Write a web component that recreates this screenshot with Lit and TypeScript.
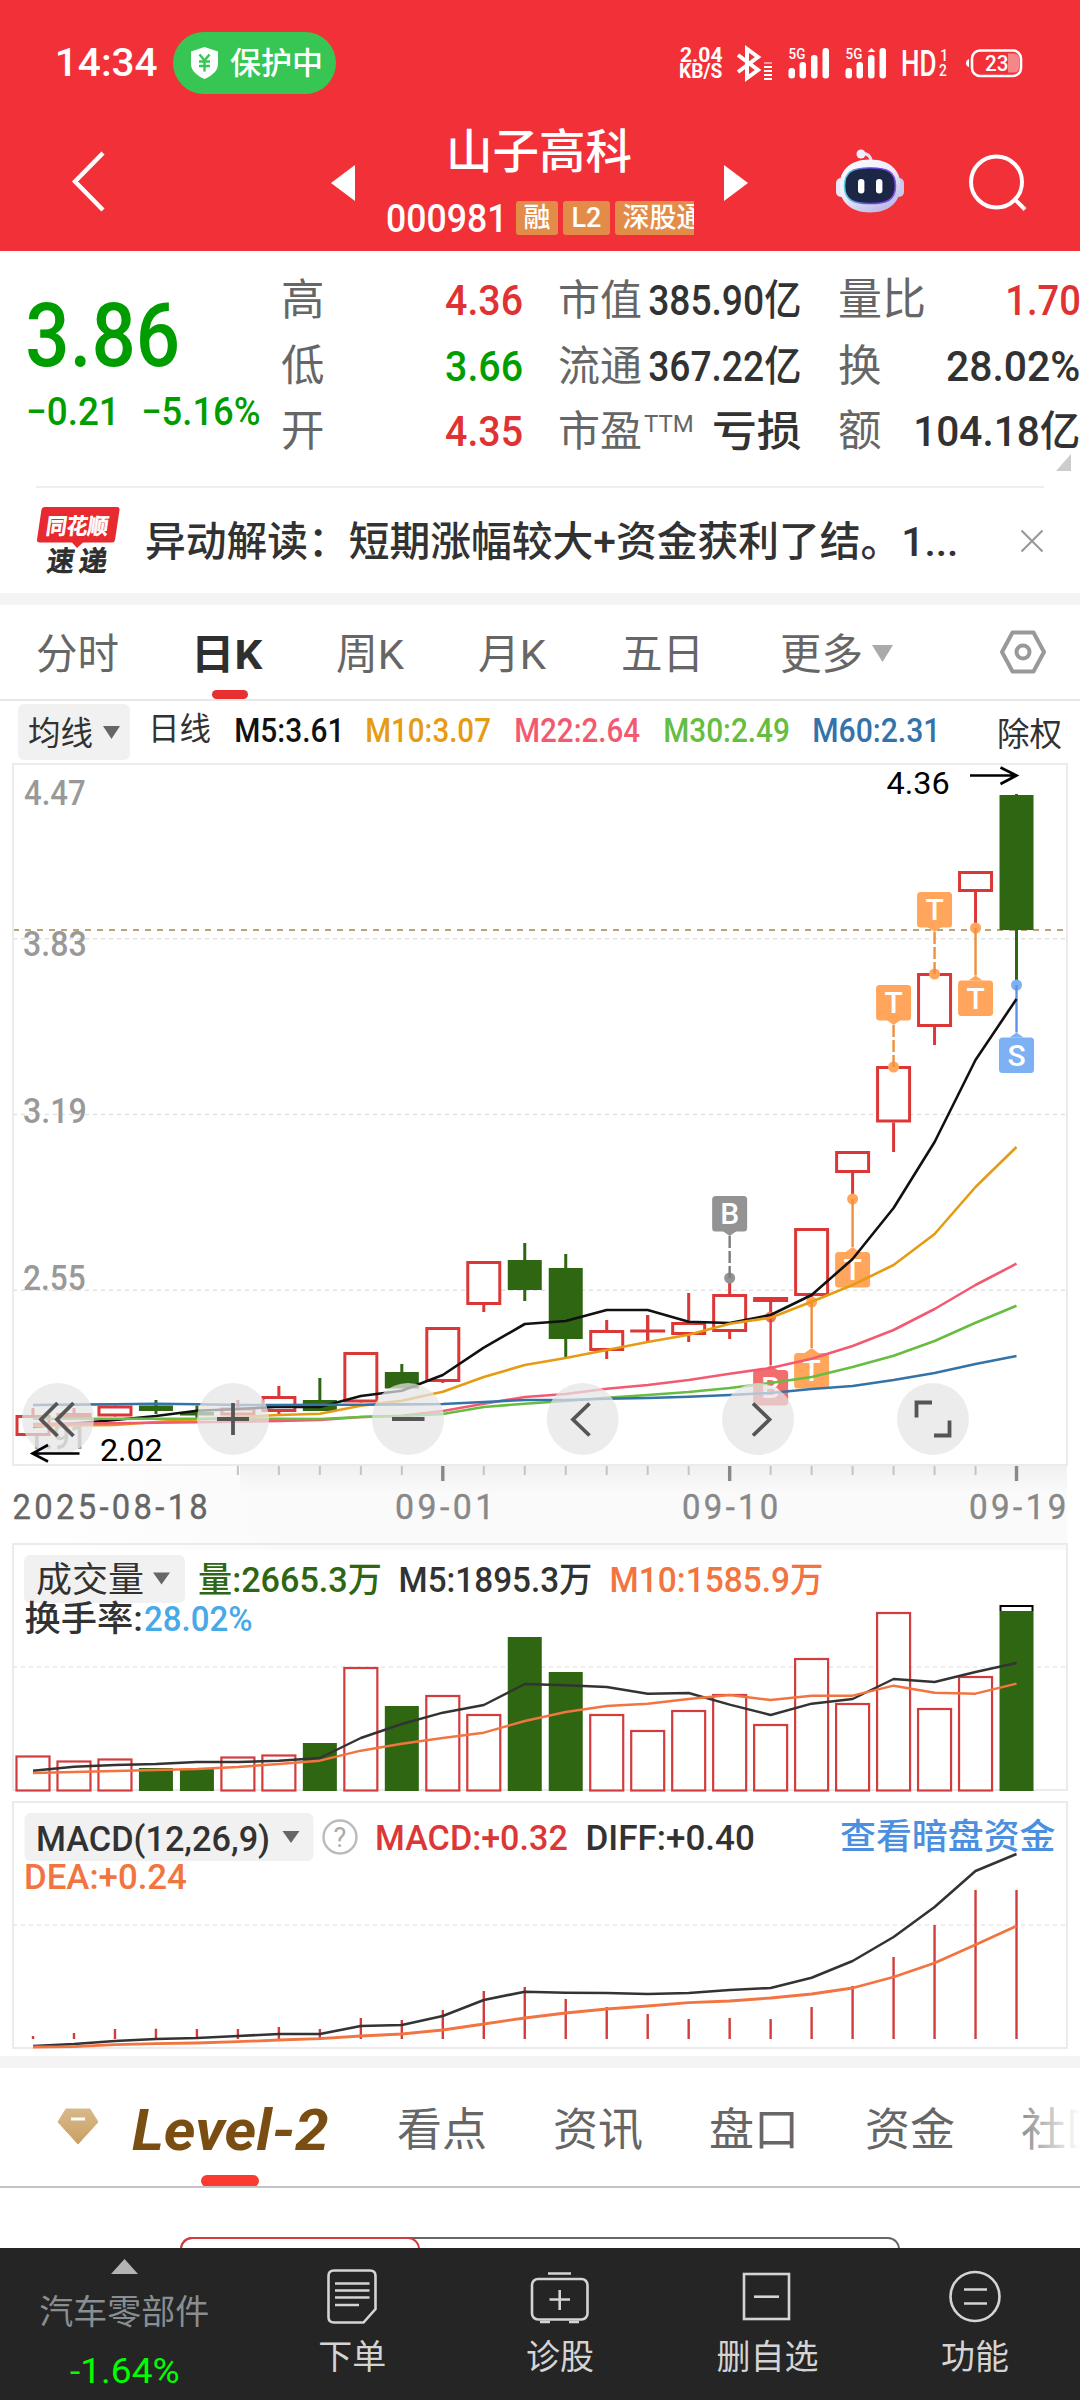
import { LitElement, html, svg, css } from "lit";
import { customElement } from "lit/decorators.js";

const STEP = 40.98;
const X0 = 33;
const cx = (i: number) => X0 + i * STEP;

type Candle = [up: number, top: number, bottom: number, high: number, low: number];
const CANDLES: Candle[] = [
  [1, 1415, 1436, 1408, 1436], [1, 1413, 1418, 1408, 1418], [1, 1405.5, 1416.5, 1403, 1416],
  [0, 1405.5, 1411, 1400, 1414], [0, 1412, 1415.5, 1405.5, 1418], [1, 1407.5, 1415.5, 1400, 1415],
  [1, 1396, 1412, 1386, 1414], [0, 1400, 1411, 1378, 1411], [1, 1352, 1402.5, 1352, 1402],
  [0, 1372, 1388.5, 1364, 1388], [1, 1327, 1382, 1327, 1383], [1, 1261, 1305, 1261, 1312],
  [0, 1260, 1290, 1243, 1301], [0, 1268, 1339, 1254, 1357], [1, 1330, 1351, 1320, 1359],
  [1, 1329.5, 1332.5, 1315, 1341], [1, 1322, 1335, 1293, 1342], [1, 1294, 1332, 1279, 1339],
  [1, 1297, 1302, 1297, 1317], [1, 1228, 1296, 1228, 1300], [1, 1151, 1173, 1151, 1199],
  [1, 1066, 1122.5, 1066, 1152], [1, 973, 1027, 973, 1045], [1, 871, 892, 871, 927],
  [0, 795, 930, 794, 985],
];

const MA_LINES: [string, number[]][] = [
  ["#111", [1427, 1423.5, 1420, 1416, 1410.7, 1409, 1406.7, 1407, 1396, 1390.7, 1375, 1347.7, 1324, 1321, 1310, 1310, 1321.7, 1323, 1315, 1295, 1259, 1208, 1142, 1060, 999]],
  ["#e59c12", [1426, 1425.5, 1425, 1422, 1419.5, 1417, 1415, 1413.7, 1405.7, 1400.7, 1391.7, 1377, 1365, 1358, 1350, 1342, 1334.7, 1323.7, 1317.7, 1301.7, 1285, 1265, 1234, 1187, 1147]],
  ["#f25a72", [1424, 1423.6, 1423.3, 1422.8, 1422.3, 1421.7, 1421, 1420, 1417, 1415.7, 1411, 1403.7, 1397, 1394, 1388.7, 1385, 1380, 1373.7, 1368, 1358.7, 1346, 1330, 1309, 1285, 1263.7]],
  ["#66bd42", [1418.7, 1418.7, 1418.7, 1418.7, 1418.7, 1418.7, 1418.8, 1419, 1417, 1416, 1414, 1407, 1403.7, 1401, 1397.7, 1395, 1392, 1388, 1383, 1377, 1367, 1355.7, 1341, 1322.7, 1305.7]],
  ["#3373a8", [1405, 1404.6, 1404.2, 1403.7, 1404.3, 1405, 1405, 1404.8, 1404.7, 1404.4, 1404, 1402, 1400, 1400, 1398.7, 1398, 1396.7, 1395, 1393, 1389, 1386, 1380, 1373, 1364, 1356]],
];

type Mark = [i: number, letter: string, color: string, line: string, dot: number, box: number];
const MARKS: Mark[] = [
  [17, "B", "#939393", "#7c7c7c", 1278, 1196],
  [18, "B", "#f26d6d", "#e24040", 1317, 1370],
  [19, "T", "#ffa65c", "#ef8f3e", 1302, 1353],
  [20, "T", "#ffa65c", "#ef8f3e", 1199, 1252],
  [21, "T", "#ffa65c", "#ef8f3e", 1067, 985],
  [22, "T", "#ffa65c", "#ef8f3e", 974, 892],
  [23, "T", "#ffa65c", "#ef8f3e", 928, 980.5],
  [24, "S", "#7db1f3", "#5a94e6", 985, 1037.5],
];

const VOL: [number, number][] = [
  [1, 1755.5], [1, 1760.5], [1, 1758.5], [0, 1768], [0, 1769], [1, 1756.5], [1, 1754.5], [0, 1743],
  [1, 1667], [0, 1706], [1, 1695], [1, 1714], [0, 1637], [0, 1672], [1, 1714], [1, 1730], [1, 1710],
  [1, 1694], [1, 1724], [1, 1658], [1, 1703], [1, 1612], [1, 1708], [1, 1676], [0, 1611],
];
const VOL_M5 = [1770.7, 1766.7, 1765, 1764, 1762, 1762, 1760.7, 1758, 1738, 1724, 1712.7, 1705, 1684, 1685.3, 1687, 1693.7, 1693, 1704.7, 1715, 1703.7, 1699, 1679, 1682, 1672, 1663];
const VOL_M10 = [1773, 1772, 1771, 1770, 1769, 1767, 1764, 1760.7, 1750.7, 1743.7, 1738, 1732.7, 1721, 1712, 1706, 1703.7, 1699, 1695, 1700, 1695.7, 1695.7, 1685.7, 1692.7, 1693.7, 1683.7];

const MACD_BAR = [2036, 2033, 2029, 2028.7, 2029, 2029, 2027, 2029, 2018, 2020, 2010, 1991, 1987, 1999, 2007, 2014, 2019, 2018, 2019, 2007, 1986, 1957, 1925, 1890, 1890];
const DIFF = [2046, 2044, 2041, 2039, 2038, 2036, 2034, 2034, 2026, 2025, 2016, 2000, 1991.7, 1992.7, 1993, 1994, 1993, 1990, 1988, 1977.7, 1961, 1937, 1907, 1871, 1854];
const DEA = [2047, 2046.7, 2044.7, 2043.7, 2043, 2041.7, 2040, 2038.7, 2036, 2034, 2030, 2024, 2018, 2013, 2009, 2006, 2002.7, 2001, 1998, 1994, 1988, 1977, 1963, 1944.7, 1926];

const line = (ys: number[], color: string, w = 2.4) =>
  svg`<polyline points=${ys.map((y, i) => `${cx(i).toFixed(1)},${y}`).join(" ")} fill="none" stroke=${color} stroke-width=${w} stroke-linejoin="round"/>`;

/* Chart text whose drawn width is w pixels, starting at x on baseline y. */
const label = (t: string, x: number, y: number, w: number, size: number, color: string) =>
  svg`<text class="num" data-x=${x} data-y=${y} data-w=${w} x=${x} y=${y} font-size=${size} fill=${color}>${t}</text>`;

/* Inline text squeezed to a drawn width of w pixels. */
const fit = (t: string, w: number, cls = "") =>
  html`<span class="fit ${cls}" style="width:${w}px"><span class="fit-in" data-w=${w}>${t}</span></span>`;

@customElement("app-root")
export class AppRoot extends LitElement {
  static styles = css`
    :host { display: block; width: 1080px; height: 2400px; overflow: hidden; background: #fff; color: #323232;
      font-family: Roboto, "Noto Sans CJK SC", sans-serif; }
    * { box-sizing: border-box; }
    svg { display: block; flex: none; overflow: visible; }
    .page { display: flex; flex-direction: column; width: 1080px; height: 2400px; }
    .fit { display: block; flex: none; white-space: nowrap; }
    .fit-in { display: inline-block; transform-origin: 0 50%; }
    .num { font-weight: 500; }
    .thin .num { font-weight: 400; }
    .dates .num { font-weight: 400; letter-spacing: 3.5px; stroke-width: .4px; }

    .head { height: 251px; background: #f23038; color: #fff; flex: none; display: flex; flex-direction: column; }
    .status { height: 126px; padding: 0 56px 0 58px; display: flex; align-items: center; }
    .time { font-size: 38px; font-weight: 500; line-height: 60px; }
    .guard { margin-left: 16px; width: 165px; height: 62px; border-radius: 31px; background: #37c653;
      display: flex; align-items: center; padding-left: 17px; gap: 11px; font-size: 31px; line-height: 62px; font-weight: 500; }
    .guard span { margin-top: 2px; }
    .rate { margin-left: 344px; font-size: 20px; font-weight: 700; line-height: 16px; }
    .sys { margin-left: 14px; }
    .title { flex: 1; display: flex; padding-left: 66px; }
    .back { margin-top: 24px; }
    .prev { margin: 39px 0 0 221px; }
    .names { width: 307px; margin-left: 32px; display: flex; flex-direction: column; }
    .stock { text-align: center; font-size: 46.5px; font-weight: 500; line-height: 50px; margin-left: -3px; padding-top: 1px; }
    .code-row { display: flex; width: 307px; height: 34px; margin-top: 24px; line-height: 36px; }
    .code { font-size: 39px; font-weight: 500; margin-right: 15px; }
    .tags { width: 178px; height: 34px; display: flex; overflow: hidden; }
    .tag { flex: none; background: #e38c4a; border-radius: 3px; height: 34px; font-size: 27px; font-weight: 500; line-height: 34px; text-align: center; margin-right: 5px; }
    .t1 { width: 42px; } .t2 { width: 47px; } .t3 { width: 96px; }
    .next { margin: 39px 0 0 30px; }
    .bot { margin: 22px 0 0 87px; }
    .find { margin: 26px 0 0 62px; }

    .quote { height: 235px; flex: none; display: flex; position: relative; }
    .last { width: 281px; padding-left: 28px; color: #009d00; }
    .price { font-size: 89px; font-weight: 500; line-height: 90px; height: 90px; margin-top: 40px; }
    .chg { display: flex; gap: 30px; font-size: 39px; line-height: 46px; margin-top: 8px; font-weight: 500; }
    .grid { display: grid; grid-template-columns: 165px 77px 35px 91px 152px 37px 88px 153px;
      grid-template-rows: 65.6px 65.6px 65.6px; line-height: 65.6px; margin-top: 17px; align-content: start; }
    .k { color: #666; font-size: 43.5px; white-space: nowrap; }
    .k.s { font-size: 42px; }
    .k.s sup { font-size: 24px; line-height: 0; vertical-align: 14px; margin-left: 2px; }
    .k.w { font-size: 44px; }
    .v { font-size: 42.5px; font-weight: 500; }
    .r { justify-self: end; }
    .up { color: #e03232; } .down { color: #009d00; }
    .corner { position: absolute; right: 9px; top: 203px; }
    .news { height: 107px; flex: none; margin: 0 36px; border-top: 2px solid #eee; display: flex; align-items: center; }
    .news-text { font-size: 41px; font-weight: 500; line-height: 60px; margin: 2px 0 0 26px; }
    .x { margin-left: auto; }
    .band { height: 12px; background: #f4f4f4; flex: none; }

    .tabs { height: 96px; flex: none; border-bottom: 2px solid #e8e8e8; display: flex; padding-left: 36px; font-size: 41.5px;
      color: #666; line-height: 100px; position: relative; }
    .tab { white-space: nowrap; flex: none; }
    .on { color: #2f2f2f; font-weight: 700; display: flex; flex-direction: column; align-items: center; }
    .on::after { content: ""; width: 36px; height: 9px; border-radius: 5px; background: #e93030; margin-top: -15px; }
    .c1 { width: 161px; } .c2 { width: 66px; margin-right: 74px; } .c3 { width: 142px; } .c4 { width: 142px; }
    .c5 { width: 159px; } .c6 { width: 90px; }
    .ma { height: 61px; flex: none; display: flex; padding-left: 18px; line-height: 56px; align-items: flex-start; }
    .pill { width: 112px; height: 56px; margin-top: 3px; background: #f1f1f1; border-radius: 6px; display: flex; align-items: center;
      padding-left: 10px; gap: 10px; font-size: 32.5px; }
    .pill span { margin-top: 4px; }
    .day { font-size: 31.5px; margin-left: 18px; width: 88px; margin-top: 1px; }
    .m { font-size: 33.5px; font-weight: 500; margin-top: 2px; }
    .m5 { color: #111; margin-right: 28px; } .m10 { color: #e59c12; margin-right: 26px; }
    .m22 { color: #f25a72; margin-right: 25px; } .m30 { color: #66bd42; margin-right: 25px; }
    .m60 { color: #3373a8; margin-right: 62px; }
    .ex { font-size: 32.5px; margin-top: 6px; }
    .chart { flex: none; overflow: visible; }

    .sections { height: 120px; flex: none; border-bottom: 2px solid #c4c4c4; display: flex; line-height: 125px; font-size: 45px;
      color: #666; overflow: hidden; position: relative; padding-left: 56px; }
    .gem { margin: 40px 32px 0 0; }
    .level { font-size: 57px; font-weight: 700; font-style: italic; color: #7a4e12; width: 196px; margin-right: 69px; height: 119px;
      display: flex; flex-direction: column; }
    .level::after { content: ""; width: 58px; height: 12px; border-radius: 6px; background: #fb3b31; margin: -18px 0 0 69px; }
    .sec { flex: none; width: 156px; }
    .fade { position: absolute; right: 0; top: 0; width: 64px; height: 117px; background: linear-gradient(90deg, #ffffff33, #fff); }
    .body { height: 60px; flex: none; padding: 49px 0 0 180px; overflow: hidden; }
    .seg { width: 720px; height: 60px; border: 2px solid #666; border-radius: 12px; }
    .seg-on { width: 240px; height: 60px; border: 2px solid #d23c3c; border-radius: 12px; margin: -2px 0 0 -2px; }

    .foot { height: 152px; flex: none; background: #252525; color: #d4d4d4; display: flex; }
    .sector { width: 248.500px; display: flex; flex-direction: column; align-items: center; color: #888e92; font-size: 34px; line-height: 40px;
      padding-top: 11px; }
    .sector-name { margin-top: 18px; }
    .sector-chg { color: #0f0; font-size: 35px; margin-top: 20px; }
    .act { width: 207.6px; display: flex; flex-direction: column; align-items: center; font-size: 34px; line-height: 40px; padding-top: 19px; gap: 10px; }
  `;

  updated() {
    const ctx = document.createElement("canvas").getContext("2d")!;
    const measure = (el: Element) => {
      const s = getComputedStyle(el);
      ctx.font = `${s.fontStyle} ${s.fontWeight} ${s.fontSize} ${s.fontFamily}`;
      const t = el.textContent || "";
      const m = ctx.measureText(t);
      const spacing = (parseFloat(s.letterSpacing) || 0) * (t.length - 1);
      return { left: -m.actualBoundingBoxLeft, ink: m.actualBoundingBoxRight + m.actualBoundingBoxLeft + spacing };
    };
    this.renderRoot.querySelectorAll<HTMLElement>(".fit-in").forEach((el) => {
      const { left, ink } = measure(el);
      el.style.transform = `scaleX(${Number(el.dataset.w) / ink}) translateX(${-left}px)`;
    });
    this.renderRoot.querySelectorAll<SVGTextElement>("text.num").forEach((el) => {
      const { left, ink } = measure(el);
      const { x, y, w } = el.dataset;
      el.setAttribute("x", String(-left));
      el.setAttribute("y", "0");
      el.setAttribute("transform", `translate(${x} ${y}) scale(${Number(w) / ink} 1)`);
    });
  }

  private head() {
    const bars = (x: number) => svg`<rect x=${x} y="21" width="6.5" height="10.5" rx="3"/><rect x=${x + 11} y="15" width="6.5" height="16.5" rx="3"/>
      <rect x=${x + 22.5} y="8" width="6.5" height="23.5" rx="3"/><rect x=${x + 34} y="1" width="6.5" height="30.5" rx="3"/>`;
    return html`<div class="head">
      <div class="status">
        ${fit("14:34", 99, "time")}
        <div class="guard">
          <svg width="29" height="32" viewBox="0 0 29 32"><path d="M14.5 0 28 4.500V17c0 7-6 11.500-13.500 15C7 28.500 1 24 1 17V4.500z" fill="#fff"/>
            <path d="M9.500 7.500l5 6 5-6M14.500 13.500v11M9 14.500h11M9 19h11" fill="none" stroke="#37c653" stroke-width="2.400"/></svg>
          <span>保护中</span>
        </div>
        <div class="rate">${fit("2.04", 42)}${fit("KB/S", 42)}</div>
        <svg class="sys" width="288" height="33" viewBox="738 47 288 33" fill="#fff">
          <path d="M740 55l20 15-11 8V49l11 8-20 15" fill="none" stroke="#fff" stroke-width="4"/>
          <g><rect x="766" y="62" width="8" height="2" opacity=".5"/><rect x="766" y="66" width="8" height="2"/><rect x="766" y="70" width="8" height="2"/><rect x="766" y="74" width="8" height="2"/><rect x="766" y="78" width="8" height="2"/></g>
          <g transform="translate(0 47)">${bars(790.5)}${bars(847.5)}</g>
          <path d="M869.500 52l4-4 4 4z"/>
          ${label("5G", 790.5, 59, 16, 14.5, "#fff")}${label("5G", 847.5, 59, 16, 14.5, "#fff")}
          ${label("HD", 904.5, 76, 33, 36, "#fff")}${label("1", 943, 60.5, 5, 16.5, "#fff")}${label("2", 941, 76, 7.5, 16.5, "#fff")}
          <rect x="974" y="50.500" width="49" height="25.500" rx="8" fill="none" stroke="#fff" stroke-width="2.600"/>
          <path d="M1010 53.500h6q5 0 5 5v9q0 5-5 5h-6z" opacity=".42"/><path d="M971 59v8q-3-1-3-4t3-4z"/>
          ${label("23", 987, 71, 23, 22, "#fff")}
        </svg>
      </div>
      <div class="title">
        <svg class="back" width="44" height="64" viewBox="66 150 44 64"><path d="M103 153L75 181.500 103 210" fill="none" stroke="#fff" stroke-width="4.400"/></svg>
        <svg class="prev" width="24" height="36" viewBox="0 0 24 36"><path d="M24 0v36L0 18z" fill="#fff"/></svg>
        <div class="names">
          <div class="stock">山子高科</div>
          <div class="code-row">${fit("000981", 114, "code")}<div class="tags"><span class="tag t1">融</span><span class="tag t2">L2</span><span class="tag t3">深股通</span></div></div>
        </div>
        <svg class="next" width="24" height="36" viewBox="0 0 24 36"><path d="M0 0v36L24 18z" fill="#fff"/></svg>
        <svg class="bot" width="70" height="66" viewBox="835 148 70 66">
          <defs>
            <linearGradient id="bh" x1="0" y1="0" x2=".6" y2="1"><stop offset="0" stop-color="#fff"/><stop offset=".55" stop-color="#ecebfa"/><stop offset="1" stop-color="#bfbce8"/></linearGradient>
            <linearGradient id="bf" x1="0" y1="0" x2="1" y2="0"><stop offset="0" stop-color="#5fd0e0"/><stop offset=".5" stop-color="#5a3fd6"/><stop offset="1" stop-color="#8a50f0"/></linearGradient>
          </defs>
          <path d="M861 153.500q9-1 10.500 8" fill="none" stroke="#e3e1f6" stroke-width="3"/><circle cx="861" cy="154" r="4.500" fill="#f0effb"/>
          <rect x="836" y="178" width="10" height="19" rx="5" fill="#e8e6f8"/><rect x="894" y="178" width="10" height="19" rx="5" fill="#cbc8ee"/>
          <path d="M870 159.500c20 0 30.500 11 30.500 26.500s-11 26.500-30.500 26.500-30.500-11-30.500-26.500 10.500-26.500 30.500-26.500z" fill="url(#bh)"/>
          <path d="M870 168c18 0 25.500 3.500 25.500 18s-9 17.500-25.500 17.500-25.500-3-25.500-17.500 7.500-18 25.500-18z" fill="#1c2746" stroke="url(#bf)" stroke-width="1.600"/>
          <rect x="858" y="179" width="6.400" height="14.500" rx="3.200" fill="#fff"/><rect x="876" y="179" width="6.400" height="14.500" rx="3.200" fill="#fff"/>
        </svg>
        <svg class="find" width="60" height="60" viewBox="968 152 60 60"><g fill="none" stroke="#fff" stroke-width="4"><circle cx="997.500" cy="182" r="25.500"/><path d="M1014.500 198l11.500 11.500"/></g></svg>
      </div>
    </div>`;
  }

  private quote() {
    return html`<div class="quote">
      <div class="last">
        <div class="price">${fit("3.86", 149)}</div>
        <div class="chg">${fit("−0.21", 85)}${fit("−5.16%", 116)}</div>
      </div>
      <div class="grid">
        <span class="k">高</span>${fit("4.36", 76, "v up")}<i></i><span class="k s">市值</span>${fit("385.90亿", 151, "v")}<i></i><span class="k w">量比</span>${fit("1.70", 71, "v up r")}
        <span class="k">低</span>${fit("3.66", 76, "v down")}<i></i><span class="k s">流通</span>${fit("367.22亿", 151, "v")}<i></i><span class="k">换</span>${fit("28.02%", 132, "v r")}
        <span class="k">开</span>${fit("4.35", 76, "v up")}<i></i><span class="k s">市盈<sup>TTM</sup></span>${fit("亏损", 87, "v r")}<i></i><span class="k">额</span>${fit("104.18亿", 163, "v r")}
      </div>
      <svg class="corner" width="15" height="17" viewBox="0 0 15 17"><path d="M15 0v17H0z" fill="#ccc"/></svg>
    </div>
    <div class="news">
      <svg width="84" height="70" viewBox="36 504 84 70">
        <path d="M44.500 505H117q3 0 2.500 3l-4.500 30q-.5 2.500-3 2.500H83l-6 5.500-5-5.500H39.500q-3 0-2.500-3l4.500-30q.5-2.500 3-2.500z" fill="#e8292f"/>
        <g font-weight="900" transform="skewX(-8)" stroke-width=".9"><text class="num" data-x="121" data-y="531.500" data-w="61" font-size="22" fill="#fff" stroke="#fff">同花顺</text>
        <text class="num" data-x="126" data-y="569" data-w="27" font-size="28" fill="#2e2e2e" stroke="#2e2e2e">速</text><text class="num" data-x="159" data-y="569" data-w="27" font-size="28" fill="#2e2e2e" stroke="#2e2e2e">递</text></g>
      </svg>
      ${fit("异动解读：短期涨幅较大+资金获利了结。1...", 810, "news-text")}
      <svg class="x" width="24" height="24" viewBox="0 0 24 24"><path d="M1.500 1.500l21 21M22.500 1.500l-21 21" stroke="#999" stroke-width="2.200"/></svg>
    </div>
    <div class="band"></div>`;
  }

  private tabs() {
    return html`<div class="tabs">
      <span class="tab c1">分时</span><span class="tab on c2">${fit("日K", 66)}</span><span class="tab c3">${fit("周K", 68)}</span><span class="tab c4">${fit("月K", 68)}</span><span class="tab c5">五日</span><span class="tab c6">更多</span>
      <svg width="180" height="94" viewBox="868 605 180 94">
        <path d="M870 645h21l-10.500 17z" fill="#aaa"/>
        <g fill="none" stroke="#999" stroke-width="4" stroke-linejoin="round"><path d="M1010.500 632.500h21l10.500 19.500-10.500 19.500h-21L1000 652z"/><circle cx="1021" cy="652" r="6.500"/></g>
      </svg>
    </div>
    <div class="ma">
      <div class="pill"><span>均线</span><svg width="17" height="13" viewBox="0 0 17 13"><path d="M0 0h17L8.500 13z" fill="#666"/></svg></div>
      <span class="day">日线</span>
      ${fit("M5:3.61", 103, "m m5")}${fit("M10:3.07", 123, "m m10")}${fit("M22:2.64", 124, "m m22")}${fit("M30:2.49", 124, "m m30")}${fit("M60:2.31", 121, "m m60")}
      <span class="ex">除权</span>
    </div>`;
  }

  private candles() {
    return CANDLES.map(([up, t, b, h, l], i) => {
      const x = cx(i);
      if (!up) return svg`<rect x=${x - 17} y=${t} width="34" height=${b - t} fill="#2f6612"/><path d="M${x} ${h}V${l}" stroke="#2f6612" stroke-width="3"/>`;
      const body = b - t <= 6
        ? svg`<rect x=${x - 17.5} y=${t} width="35" height=${b - t} fill="#db3737"/>`
        : svg`<rect x=${x - 16} y=${t + 1.5} width="32" height=${b - t - 3} fill="#fff" stroke="#db3737" stroke-width="3"/>`;
      return svg`<path d="M${x} ${h}V${t}M${x} ${b}V${l}" stroke="#db3737" stroke-width="3"/>${b - t === 3 ? svg`<path d="M${x} ${h}V${l}" stroke="#db3737" stroke-width="3"/>` : ""}${body}`;
    });
  }

  private marks() {
    return MARKS.map(([i, ch, color, stem, dot, box]) => {
      const x = cx(i);
      const above = box < dot;
      const edge = above ? box + 35 : box;
      const tip = above ? edge + 5 : edge - 5;
      return svg`<circle cx=${x} cy=${dot} r="5.500" fill=${color}/>
        <path d="M${x} ${tip}V${dot}" stroke=${stem} stroke-width="2.400" stroke-dasharray=${above ? "12 3" : "none"}/>
        <rect x=${x - 17.5} y=${box} width="35" height="35.500" rx="3.500" fill=${color}/>
        <path d="M${x - 7} ${edge}L${x} ${tip}L${x + 7} ${edge}z" fill=${color}/>
        <text x=${x} y=${box + 28} text-anchor="middle" font-size="30" font-weight="500" fill="#fff">${ch}</text>`;
    });
  }

  private kline() {
    const buttons: [number, string][] = [
      [58, "M57.5 1403L41 1419.500l16.500 16.500M73.500 1403L57 1419.500l16.500 16.500"],
      [233, "M217 1419h32M233 1403v32"],
      [408, "M392 1419h32.500"],
      [582.7, "M589.500 1403.500L573 1419.500l16.500 16"],
      [758, "M753 1403.500l16.500 16-16.500 16"],
      [933, "M932 1402.500h-15.500v15M934 1435.500h15.500v-15"],
    ];
    return html`<svg class="chart" width="1080" height="782" viewBox="0 762 1080 782">
      <defs>
        <linearGradient id="ax" x1="0" y1="0" x2="1" y2="0"><stop offset="0" stop-color="#fff"/><stop offset=".25" stop-color="#fafafa"/><stop offset="1" stop-color="#fafafa"/></linearGradient>
        <linearGradient id="sh" x1="0" y1="0" x2="0" y2="1"><stop offset="0" stop-color="#000" stop-opacity=".04"/><stop offset="1" stop-color="#000" stop-opacity="0"/></linearGradient>
      </defs>
      <rect x="12" y="1465" width="1055" height="85" fill="url(#ax)"/>
      <rect x="240" y="1465" width="827" height="28" fill="url(#sh)"/>
      <g stroke="#e2e2e2" stroke-width="1.500" stroke-dasharray="4 4"><path d="M13 938.700H1066M13 1114.500H1066M13 1290.300H1066"/></g>
      <path d="M13 930H1064" stroke="#b9a574" stroke-width="2" stroke-dasharray="6 6"/>
      <path d="M13 764H1067V1465H13z" fill="none" stroke="#ebebeb" stroke-width="2"/>
      ${label("4.47", 24, 805, 61, 35, "#999")}${label("3.83", 24, 956, 61, 35, "#999")}${label("3.19", 24, 1123, 61, 35, "#999")}${label("2.55", 24, 1290, 61, 35, "#999")}${label("1.91", 29, 1449, 53, 35, "#999")}
      ${this.candles()}
      ${this.marks()}
      ${MA_LINES.map(([c, ys]) => line(ys, c, 2.6))}
      ${buttons.map(([x, d]) => svg`<circle cx=${x} cy="1419" r="36" fill="#e4e4e4" fill-opacity=".72"/><path d=${d} fill="none" stroke="#555" stroke-width="3.800"/>`)}
      <g class="thin">${label("4.36", 886.5, 794, 62, 30.5, "#000")}${label("2.02", 101, 1461, 61.5, 30.5, "#000")}</g>
      <g fill="none" stroke="#000" stroke-width="2.600"><path d="M970 775.500h46M1000.500 767.500l16 8-16 8.500"/><path d="M79.500 1453.500H33M48 1445l-15.500 8.500 15.500 8"/></g>
      ${Array.from({ length: 20 }, (_, n) => n + 5).map((i) => {
        const major = i === 10 || i === 17 || i === 24;
        return svg`<path d="M${cx(i)} 1466V${major ? 1481 : 1475}" stroke=${major ? "#888" : "#c4c4c4"} stroke-width=${major ? 3.4 : 2}/>`;
      })}
      <g class="dates"><g stroke="#666">${label("2025-08-18", 13.5, 1519, 193, 34.5, "#666")}</g><g stroke="#888">${label("09-01", 396, 1519, 92, 34.5, "#888")}${label("09-10", 683, 1519, 94, 34.5, "#888")}${label("09-19", 970, 1519, 95, 34.5, "#888")}</g></g>
    </svg>`;
  }

  private volume() {
    return html`<svg class="chart" width="1080" height="258" viewBox="0 1544 1080 258">
      <path d="M13 1544H1067V1790H13z" fill="none" stroke="#ebebeb" stroke-width="2"/>
      <path d="M13 1667H1066" stroke="#e8e8e8" stroke-width="1.600" stroke-dasharray="4 4"/>
      ${VOL.map(([up, t], i) => up
        ? svg`<rect x=${cx(i) - 16.5} y=${t + 1} width="33" height=${1790.5 - t - 1} fill="#fff" stroke="#d23c3c" stroke-width="2.200"/>`
        : svg`<rect x=${cx(i) - 17} y=${t} width="34" height=${1791 - t} fill="#2f6612"/>`)}
      <path d="M1000.500 1611v-5h32v5" fill="none" stroke="#000" stroke-width="2"/>
      ${line(VOL_M5, "#333")}${line(VOL_M10, "#f27440")}
      <rect x="24" y="1555" width="161" height="48" rx="6" fill="#f1f1f1"/>
      <g class="thin">${label("成交量", 37, 1592, 106, 35, "#323232")}</g>
      <path d="M153 1572.500h17l-8.500 12z" fill="#666"/>
      ${label("量:2665.3万", 199, 1592, 181, 35, "#2f6612")}${label("M5:1895.3万", 400.5, 1592, 190, 35, "#323232")}${label("M10:1585.9万", 611.5, 1592, 210, 35, "#f27440")}
      ${label("换手率:", 25.5, 1631, 115, 35, "#323232")}${label("28.02%", 145, 1631, 107, 35, "#46a9e8")}
    </svg>`;
  }

  private macd() {
    return html`<svg class="chart" width="1080" height="254" viewBox="0 1802 1080 254">
      <path d="M13 1802H1067V2048H13z" fill="none" stroke="#ebebeb" stroke-width="2"/>
      <path d="M13 1925H1066" stroke="#e8e8e8" stroke-width="1.600" stroke-dasharray="4 4"/>
      ${MACD_BAR.map((t, i) => svg`<path d="M${cx(i)} ${t}V2039" stroke="#d23c3c" stroke-width="2.400"/>`)}
      <rect x="24.500" y="1813" width="289" height="48" rx="6" fill="#f1f1f1"/>
      ${label("MACD(12,26,9)", 38, 1851, 231, 35, "#323232")}
      <path d="M282.500 1831h17l-8.500 12z" fill="#666"/>
      <circle cx="340" cy="1837" r="16.500" fill="none" stroke="#bbb" stroke-width="2.400"/>
      <text x="340" y="1846.500" font-size="27" text-anchor="middle" fill="#aaa">?</text>
      ${label("MACD:+0.32", 377, 1850, 190, 35, "#db3737")}${label("DIFF:+0.40", 587.5, 1850, 166.5, 35, "#323232")}${label("查看暗盘资金", 841, 1849, 214, 35.5, "#4a8fe0")}
      ${label("DEA:+0.24", 26, 1889, 161, 35, "#f27440")}
      ${line(DIFF, "#333", 2.6)}${line(DEA, "#f27440", 2.8)}
    </svg>`;
  }

  render() {
    return html`<div class="page">
      ${this.head()}${this.quote()}${this.tabs()}${this.kline()}${this.volume()}${this.macd()}
      <div class="band"></div>
      <div class="sections">
        <svg class="gem" width="44" height="38" viewBox="0 0 44 38"><defs><linearGradient id="gm" x1="0" y1="0" x2="0" y2="1"><stop offset="0" stop-color="#d8b88a"/><stop offset="1" stop-color="#c9a063"/></linearGradient></defs>
          <path d="M10 1h24l8 13-20 22L2 14z" fill="url(#gm)" stroke="url(#gm)" stroke-linejoin="round"/><path d="M15 11h14" stroke="#fff" stroke-width="3"/></svg>
        <div class="level">${fit("Level-2", 196)}</div>
        <span class="sec">看点</span><span class="sec">资讯</span><span class="sec">盘口</span><span class="sec">资金</span><span class="sec">社区</span>
        <div class="fade"></div>
      </div>
      <div class="body"><div class="seg"><div class="seg-on"></div></div></div>
      <div class="foot">
        <div class="sector">
          <svg width="27" height="15" viewBox="0 0 27 15"><path d="M13.500 0L27 15H0z" fill="#b4b4b4"/></svg>
          <span class="sector-name">汽车零部件</span>
          ${fit("-1.64%", 109, "sector-chg")}
        </div>
        <div class="act"><svg width="60" height="60" viewBox="322 2267 60 60"><g fill="none" stroke="#d4d4d4" stroke-width="2.600"><path d="M334 2270.500h36q5.500 0 5.500 5.500v33l-12 13.500h-29.500q-5.500 0-5.500-5.500v-41q0-5.500 5.500-5.500z"/><path d="M335 2283.500h34.500M335 2290.500h34.500M335 2297.500h34.500M335 2305h24"/></g></svg><span>下单</span></div>
        <div class="act"><svg width="60" height="60" viewBox="530 2267 60 60"><g fill="none" stroke="#d4d4d4" stroke-width="2.600"><rect x="532" y="2279" width="55.500" height="40.500" rx="6"/><path d="M548 2273.500h23M540 2322h10M569 2322h10M559.700 2290v20M549.500 2299.500h20.500"/></g></svg><span>诊股</span></div>
        <div class="act"><svg width="60" height="60" viewBox="738 2267 60 60"><g fill="none" stroke="#d4d4d4" stroke-width="2.600"><rect x="745" y="2274" width="45" height="45"/><path d="M755 2296.700h25"/></g></svg><span>删自选</span></div>
        <div class="act"><svg width="60" height="60" viewBox="945 2267 60 60"><g fill="none" stroke="#d4d4d4" stroke-width="2.600"><circle cx="975" cy="2296.500" r="24.500"/><path d="M964 2289.500h23M964 2303.500h23"/></g></svg><span>功能</span></div>
      </div>
    </div>`;
  }
}
